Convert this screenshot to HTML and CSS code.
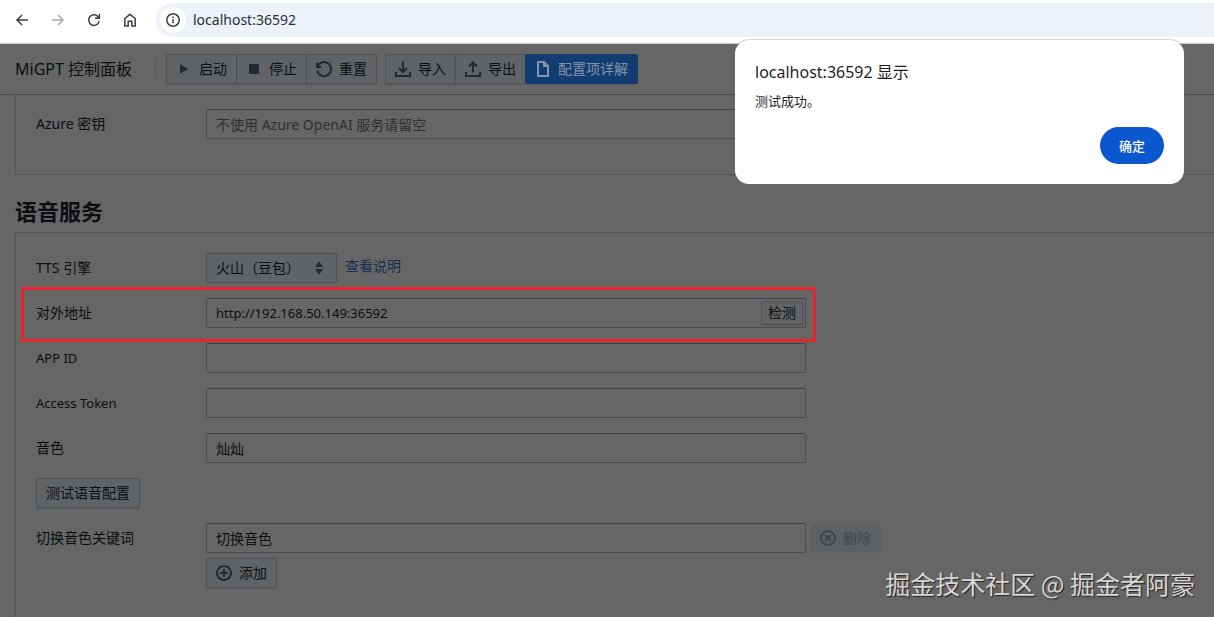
FILE: index.html
```html
<!DOCTYPE html>
<html lang="zh-CN">
<head>
<meta charset="utf-8">
<title>MiGPT 控制面板</title>
<link rel="stylesheet" href="styles.css">
</head>
<body>
<div class="browser-bar">
  <button class="nav-button" aria-label="后退"><svg class="icon" viewBox="0 0 16 16"><path d="M14 8H3M8 3L3 8l5 5"/></svg></button>
  <button class="nav-button nav-disabled" aria-label="前进"><svg class="icon" viewBox="0 0 16 16"><path d="M2 8h11M8 3l5 5-5 5"/></svg></button>
  <button class="nav-button" aria-label="刷新"><svg class="icon" viewBox="0 0 16 16"><path d="M12.6 5.4A5.3 5.3 0 1 0 13.2 9.2M13.4 2v4.3H9"/></svg></button>
  <button class="nav-button" aria-label="主页"><svg class="icon" viewBox="0 0 16 16"><path d="M2.8 6.5L8 2.3l5.200 4.200V14H9.800V9.300H6.200V14H2.800z"/></svg></button>
  <div class="address">
    <button class="site-info" aria-label="网站信息"><svg class="icon" viewBox="0 0 16 16"><circle cx="8" cy="8" r="6.200"/><path d="M8 7.300v4M8 4.500v1.500"/></svg></button>
    <input class="address-input" aria-label="地址" value="localhost:36592">
  </div>
</div>

<header class="toolbar">
  <h1 class="app-title">MiGPT 控制面板</h1>
  <div class="divider"></div>
  <div class="group">
    <button class="button"><svg class="icon solid" viewBox="0 0 16 16"><path d="M4 3.200L12.200 8 4 12.800z"/></svg>启动</button>
    <button class="button"><svg class="icon solid" viewBox="0 0 16 16"><path d="M3 3h10v10H3z"/></svg>停止</button>
    <button class="button"><svg class="icon heavy" viewBox="0 0 16 16"><path d="M1 1.500V6h4.500M1.600 5.400A7 7 0 1 1 1.200 9.500"/></svg>重置</button>
  </div>
  <div class="group">
    <button class="button"><svg class="icon heavy" viewBox="0 0 16 16"><path d="M8 0.500v10M4 7l4 4 4-4M1 11v4h14v-4"/></svg>导入</button>
    <button class="button"><svg class="icon heavy" viewBox="0 0 16 16"><path d="M8 11.500V2M4 5.500l4-4 4 4M1 11v4h14v-4"/></svg>导出</button>
    <button class="button primary"><svg class="icon heavy" viewBox="0 0 16 16"><path d="M3 1h6l4 4v10H3zM9 1v4h4"/></svg>配置项详解</button>
  </div>
</header>

<main class="content">
  <section class="panel panel-top">
    <div class="row">
      <label class="label" for="azure">Azure 密钥</label>
      <input class="field" id="azure" placeholder="不使用 Azure OpenAI 服务请留空">
    </div>
  </section>
  <h2 class="section-title">语音服务</h2>
  <section class="panel panel-voice">
    <div class="row">
      <label class="label" for="engine">TTS 引擎</label>
      <div class="select-box">
        <select class="select" id="engine"><option>火山（豆包）</option></select>
        <svg class="icon solid select-icon" viewBox="0 0 16 16"><path d="M8 1.500L12 7H4zM8 14.500L4 9h8z"/></svg>
      </div>
      <a class="link" href="#help">查看说明</a>
    </div>
    <div class="row highlighted">
      <label class="label" for="host">对外地址</label>
      <div class="field field-group">
        <input class="inner-input latin" id="host" value="http://192.168.50.149:36592">
        <button class="button small">检测</button>
      </div>
    </div>
    <div class="row">
      <label class="label latin" for="appid">APP ID</label>
      <input class="field" id="appid">
    </div>
    <div class="row">
      <label class="label latin" for="token">Access Token</label>
      <input class="field" id="token">
    </div>
    <div class="row">
      <label class="label" for="voice">音色</label>
      <input class="field" id="voice" value="灿灿">
    </div>
    <div class="row"><button class="button">测试语音配置</button></div>
    <div class="row keyword-row">
      <label class="label" for="keyword">切换音色关键词</label>
      <input class="field" id="keyword" value="切换音色">
      <button class="button disabled" disabled><svg class="icon heavy" viewBox="0 0 16 16"><circle cx="8" cy="8" r="7"/><path d="M5 5l6 6M11 5l-6 6"/></svg>删除</button>
    </div>
    <div class="row add-row">
      <button class="button"><svg class="icon heavy" viewBox="0 0 16 16"><circle cx="8" cy="8" r="7"/><path d="M8 4v8M4 8h8"/></svg>添加</button>
    </div>
  </section>
</main>

<div class="dialog" role="alertdialog" aria-labelledby="dialog-title">
  <h2 class="dialog-title" id="dialog-title">localhost:36592 显示</h2>
  <p class="dialog-text">测试成功。</p>
  <button class="confirm">确定</button>
</div>
<div class="watermark">掘金技术社区 @ 掘金者阿豪</div>
</body>
</html>
```
FILE: styles.css
```css
*, *::after { box-sizing: border-box; }
body {
  margin: 0;
  min-height: 100vh;
  display: flex;
  flex-direction: column;
  overflow: hidden;
  background: #666;
  color: #0b0e11;
  font: 14px/20px "Noto Sans", "Noto Sans CJK SC", sans-serif;
}
button, input, select { font: inherit; color: inherit; }
button, input { margin: 0; padding: 0; border: 0; background: none; }
h1, h2, p { margin: 0; font-weight: 400; }

.icon {
  width: 16px;
  height: 16px;
  flex: none;
  fill: none;
  stroke: currentColor;
  stroke-width: 1.5;
}
.heavy { stroke-width: 2; color: #25292d; }
.solid { fill: #25292d; stroke: none; }

.browser-bar {
  display: flex;
  align-items: center;
  gap: 20px;
  height: 44px;
  padding: 0 0 4px 14px;
  background: #fff;
  border-bottom: 1px solid #c8cacc;
  color: #3c3f43;
}
.nav-button { display: flex; }
.nav-disabled { color: #aaa; }
.address {
  display: flex;
  align-items: center;
  flex: 1;
  gap: 7px;
  height: 34px;
  margin-left: -2px;
  padding-left: 4px;
  border-radius: 17px 0 0 17px;
  background: #edf2fa;
}
.site-info {
  display: flex;
  align-items: center;
  justify-content: center;
  width: 26px;
  height: 26px;
  border-radius: 50%;
  background: #fff;
}
.address-input { flex: 1; color: #2b2d31; }

.toolbar {
  display: flex;
  align-items: center;
  height: 51px;
  padding-left: 15px;
  border-bottom: 1px solid #4d4d4d;
}
.app-title { min-width: 116px; font-size: 16px; line-height: 20px; }
.divider { width: 1px; height: 20px; margin: 0 10px 0 23px; background: #5a5a5a; }
.group { display: flex; margin-right: 8px; }
.group .button:not(:last-child) { margin-right: -1px; }
.button {
  display: flex;
  align-items: center;
  gap: 7px;
  height: 30px;
  padding: 0 9px;
  border: 1px solid #4f5256;
  border-radius: 2px;
  background: #616466;
  box-shadow: 0 1px 1px #595b5d;
  white-space: nowrap;
}
.primary { background: #123d73; border-color: #123a6c; color: #8794a6; }
.primary .icon { color: #8794a6; }
.small { height: 24px; padding: 0 6px; }
.disabled { background: #5e6163; border-color: #5e6163; box-shadow: none; color: #43474a; }
.disabled .icon { color: #43474a; }

.content { display: flex; flex-direction: column; flex: 1; padding-left: 15px; }
.panel { padding-left: 20px; border: solid #555; border-width: 0 0 0 1px; }
.panel-top { height: 80px; padding-top: 14px; border-bottom-width: 1px; }
.section-title {
  margin: 21px 0 6px;
  font-size: 22px;
  line-height: 30px;
  font-weight: 700;
}
.panel-voice { flex: 1; padding-top: 20px; border-top-width: 1px; }
.row { display: flex; position: relative; margin-bottom: 15px; }
.label { width: 170px; line-height: 30px; flex: none; }
.latin { font-size: 13px; }
.field {
  width: 600px;
  height: 30px;
  padding: 0 9px;
  border: 1px solid #4b4d4f;
  border-top-color: #3f4143;
  border-radius: 2px;
}
.field::placeholder { color: #2c3034; opacity: 1; }
.field-group { display: flex; align-items: center; padding-right: 2px; }
.inner-input { flex: 1; }
.select-box { position: relative; }
.select {
  appearance: none;
  width: 131px;
  height: 30px;
  padding: 0 9px;
  border: 1px solid #4d5053;
  border-radius: 2px;
  background: #616466;
}
.select-icon { position: absolute; right: 10px; top: 7px; pointer-events: none; }
.link { margin-left: 8px; line-height: 26px; color: #142f50; text-decoration: none; }
.highlighted::after {
  content: "";
  position: absolute;
  left: -15px;
  top: -11px;
  width: 795px;
  height: 55px;
  border: 3px solid #e8242c;
  pointer-events: none;
}
.keyword-row { gap: 4px; margin-bottom: 5px; }
.keyword-row .label { width: 166px; }
.add-row { padding-left: 170px; }

.dialog {
  position: absolute;
  top: 40px;
  right: 30px;
  display: flex;
  flex-direction: column;
  width: 449px;
  padding: 20px;
  border-radius: 14px;
  background: #fff;
  box-shadow: 0 0 2px #777;
  color: #1f1f1f;
}
.dialog-title { font-size: 16px; line-height: 24px; }
.dialog-text { margin-top: 7px; font-size: 13px; line-height: 20px; }
.confirm {
  align-self: flex-end;
  width: 64px;
  height: 37px;
  margin-top: 16px;
  border-radius: 19px;
  background: #0b57d0;
  color: #fff;
  font-size: 13px;
  font-weight: 500;
}
.watermark {
  position: absolute;
  right: 19px;
  bottom: 17px;
  color: #d6d6d6;
  font-family: "Noto Sans CJK SC", sans-serif;
  font-size: 25px;
  line-height: 34px;
  text-shadow: 1px 1px 1px #222;
}
```
